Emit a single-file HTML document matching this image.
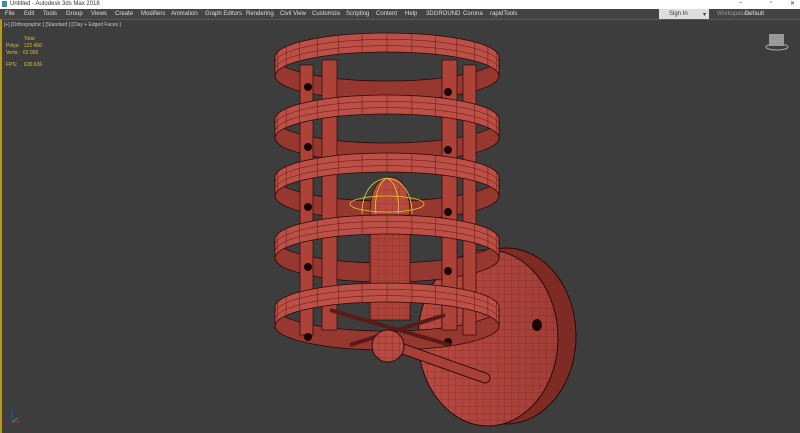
<!DOCTYPE html>
<html><head><meta charset="utf-8"><style>
body{margin:0;width:800px;height:433px;overflow:hidden;background:#3c3c3c;font-family:"Liberation Sans",sans-serif;}
#title{position:absolute;left:0;top:0;width:800px;height:9px;background:#fff;font-size:6px;color:#333;}
#menu{position:absolute;left:0;top:9px;width:800px;height:10px;background:#444;font-size:6px;color:#ddd;}
#menu span{position:absolute;top:2px}
#vp{position:absolute;left:0;top:19px;width:800px;height:414px;background:#3d3d3d;border-left:2px solid #b59a2a;box-sizing:border-box;border-top:1px solid #6a5c2a}
.y{position:absolute;font-size:5px;color:#d8c040}
</style></head><body>
<div id="title"><span style="position:absolute;left:2px;top:1px;width:5px;height:6px;background:#3a8aa8"></span><span style="position:absolute;left:10px;top:1px">Untitled - Autodesk 3ds Max 2018</span>
<span style="position:absolute;left:739px;top:0px">–</span><span style="position:absolute;left:770px;top:0px">▫</span><span style="position:absolute;left:790px;top:0px">✕</span></div>
<div id="menu">
<span style="left:5px">File</span><span style="left:24px">Edit</span><span style="left:43px">Tools</span><span style="left:66px">Group</span><span style="left:91px">Views</span><span style="left:115px">Create</span><span style="left:141px">Modifiers</span><span style="left:171px">Animation</span><span style="left:205px">Graph Editors</span><span style="left:246px">Rendering</span><span style="left:280px">Civil View</span><span style="left:312px">Customize</span><span style="left:346px">Scripting</span><span style="left:376px">Content</span><span style="left:405px">Help</span><span style="left:426px">3DGROUND</span><span style="left:463px">Corona</span><span style="left:490px">rapidTools</span>
<div style="position:absolute;left:659px;top:0;width:50px;height:10px;background:#ddd;color:#333"><span style="left:10px;top:2px">Sign In</span><span style="left:44px;top:2px">▾</span></div>
<span style="left:717px;color:#999">Workspaces:</span><span style="left:745px">Default</span>
</div>
<div id="vp">
<div style="position:absolute;left:2px;top:2px;font-size:5px;color:#ccc">[+] [Orthographic ] [Standard ] [Clay + Edged Faces ]</div>
<div class="y" style="left:22px;top:16px">Total</div>
<div class="y" style="left:4px;top:23px">Polys:&nbsp;&nbsp;&nbsp;122 450</div>
<div class="y" style="left:4px;top:30px">Verts:&nbsp;&nbsp;&nbsp;62 055</div>
<div class="y" style="left:4px;top:42px">FPS:&nbsp;&nbsp;&nbsp;&nbsp;&nbsp;630.636</div>
</div>
<svg id="s" width="800" height="433" style="position:absolute;left:0;top:0">
<defs>
<pattern id="g" width="7" height="7" patternUnits="userSpaceOnUse"><path d="M0 0H7M0 0V7" stroke="#4a1410" stroke-width="0.5" fill="none"/></pattern>
<linearGradient id="dg" x1="0" x2="1"><stop offset="0" stop-color="#b84a42"/><stop offset="1" stop-color="#a23e37"/></linearGradient>
</defs>
<ellipse cx="777" cy="47" rx="11" ry="3" fill="none" stroke="#aaa" stroke-width="1"/>
<rect x="769" y="34" width="15" height="12" fill="#999"/>
<path d="M12 422V410" stroke="#3344dd"/><path d="M12 422H20" stroke="#cc2222"/><path d="M12 422L18 418" stroke="#22aa22"/>
<ellipse cx="506" cy="336" rx="70" ry="88" fill="#7e2b24" stroke="#2a0806"/>
<ellipse cx="488" cy="338" rx="70" ry="88" fill="url(#dg)" stroke="#2a0806"/>
<ellipse cx="488" cy="338" rx="70" ry="88" fill="url(#g)" opacity=".7"/>
<ellipse cx="537" cy="325" rx="5" ry="6" fill="#1a0504"/>
<g id="back"></g>
<g fill="#ad4239" stroke="#2a0806" stroke-width="0.7">
<rect x="300" y="65" width="13" height="270"/><rect x="322" y="60" width="15" height="270"/>
<rect x="442" y="60" width="15" height="270"/><rect x="463" y="65" width="13" height="270"/>
<path d="M370 218V320H410V218Z"/>
<path d="M370 215C370 190 378 177 390 177C402 177 410 190 410 215Z" fill="#b84a42"/>
</g>
<path d="M370 218V320H410V218ZM370 215C370 190 378 177 390 177C402 177 410 190 410 215Z" fill="url(#g)" opacity=".6"/>
<g fill="#1a0504"><circle cx="308" cy="87" r="4"/><circle cx="448" cy="92" r="4"/><circle cx="308" cy="147" r="4"/><circle cx="448" cy="150" r="4"/><circle cx="308" cy="207" r="4"/><circle cx="448" cy="212" r="4"/><circle cx="308" cy="267" r="4"/><circle cx="448" cy="271" r="4"/><circle cx="308" cy="337" r="4"/><circle cx="448" cy="342" r="4"/></g>
<g fill="none" stroke="#e0d020" stroke-width="0.8">
<ellipse cx="387" cy="204" rx="37" ry="8"/><path d="M362 214C362 192 372 180 387 178C402 180 412 192 412 214"/><path d="M376 214C374 196 379 182 387 178M398 214C400 196 395 182 387 178"/>
</g>
<g id="front"></g>
<path d="M330 310L450 345M350 345L445 315" stroke="#5a1a16" stroke-width="4"/>
<path d="M392 345L485 378" stroke="#2a0806" stroke-width="11" stroke-linecap="round"/>
<path d="M392 345L485 378" stroke="#a84038" stroke-width="9" stroke-linecap="round"/>
<circle cx="388" cy="346" r="16" fill="#b84a42" stroke="#2a0806"/>
<circle cx="388" cy="346" r="16" fill="url(#g)" opacity=".8"/>
</svg>
<script>
var ns="http://www.w3.org/2000/svg",b=document.getElementById("back"),f=document.getElementById("front");
var A=[57,119,177,239,307],h=19,rx=112,ry=24,cx=387;
function el(p,d,fi){var e=document.createElementNS(ns,"path");e.setAttribute("d",d);e.setAttribute("fill",fi);e.setAttribute("stroke","#2a0806");e.setAttribute("stroke-width","0.8");p.appendChild(e);}
A.forEach(function(a){
 el(b,"M275 "+a+" A112 24 0 0 0 499 "+a+" L499 "+(a+h)+" A112 24 0 0 1 275 "+(a+h)+"Z","#963830");
 el(f,"M275 "+a+" A112 24 0 0 1 499 "+a+" L499 "+(a+h)+" A112 24 0 0 0 275 "+(a+h)+"Z","#bc4f46");
 var d="";
 for(var i=1;i<14;i++){var t=Math.PI*i/14,x=cx-rx*Math.cos(t),y=a-ry*Math.sin(t);d+="M"+x.toFixed(1)+" "+y.toFixed(1)+"v"+h;}
 for(var k=1;k<3;k++){var yy=a+h*k/3;d+="M275 "+yy+" A112 24 0 0 1 499 "+yy;}
 var e=document.createElementNS(ns,"path");e.setAttribute("d",d);e.setAttribute("fill","none");e.setAttribute("stroke","#5a1812");e.setAttribute("stroke-width","0.5");f.appendChild(e);
});
</script>
</body></html>
